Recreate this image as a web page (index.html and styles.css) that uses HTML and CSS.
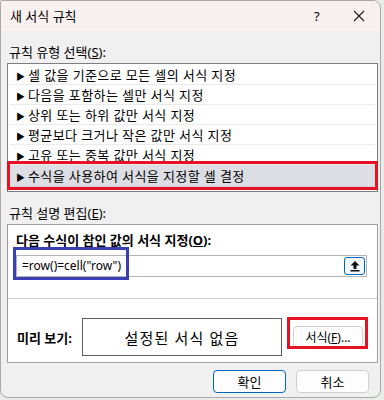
FILE: index.html
```html
<!DOCTYPE html>
<html lang="ko">
<head>
    <meta charset="UTF-8">
    <meta name="viewport" content="width=device-width, initial-scale=1.0">
    <title>새 서식 규칙</title>
    <link rel="stylesheet" href="styles.css">
</head>
<body>
    <div class="window">
        <div class="titlebar">
            <span class="title">새 서식 규칙</span>
            <span class="help">?</span>
            <svg class="close" width="12" height="12" viewBox="0 0 12 12">
                <path d="M1 1 L11 11 M11 1 L1 11" stroke="#1a1a1a" stroke-width="1.1" fill="none" />
            </svg>
        </div>

        <div class="content">
            <div class="label">규칙 유형 선택(<u>S</u>):</div>
            <ul class="rule-list">
                <li><span class="arrow">▶</span>셀 값을 기준으로 모든 셀의 서식 지정</li>
                <li><span class="arrow">▶</span>다음을 포함하는 셀만 서식 지정</li>
                <li><span class="arrow">▶</span>상위 또는 하위 값만 서식 지정</li>
                <li><span class="arrow">▶</span>평균보다 크거나 작은 값만 서식 지정</li>
                <li><span class="arrow">▶</span>고유 또는 중복 값만 서식 지정</li>
                <li class="selected"><span class="arrow">▶</span>수식을 사용하여 서식을 지정할 셀 결정</li>
            </ul>

            <div class="label label-edit">규칙 설명 편집(<u>E</u>):</div>
            <div class="panel">
                <div class="panel-top">
                    <div class="bold-label">다음 수식이 참인 값의 서식 지정(<u>O</u>):</div>
                    <div class="formula">
                        <span class="formula-text">=row()=cell("row")</span>
                        <span class="range-btn">
                            <svg width="10" height="12" viewBox="0 0 10 12">
                                <path d="M5 1 L9.5 5.5 L6.5 5.5 L6.5 9 L3.5 9 L3.5 5.5 L0.5 5.5 Z" fill="#111" />
                                <rect x="0.5" y="10" width="9" height="1.5" fill="#111" />
                            </svg>
                        </span>
                    </div>
                </div>
                <div class="panel-bottom">
                    <span class="bold-label preview-label">미리 보기:</span>
                    <div class="preview">설정된 서식 없음</div>
                    <button class="btn format-btn">서식(<u>F</u>)...</button>
                </div>
            </div>

            <div class="actions">
                <button class="btn primary">확인</button>
                <button class="btn">취소</button>
            </div>
        </div>

        <!-- annotation boxes -->
        <div class="mark mark-rule"></div>
        <div class="mark mark-formula"></div>
        <div class="mark mark-format"></div>
    </div>
</body>
</html>
```

FILE: styles.css
```css
/* General Styles */
body {
    margin: 0;
    padding: 0;
    background-color: #e9ece9;
    font-family: "Noto Sans", "Noto Sans CJK KR", sans-serif;
    font-size: 13px;
    color: #000;
}

.window {
    position: relative;
    width: 381px;
    height: 398px;
    box-sizing: border-box;
    border: 1px solid #a9a9a9;
    border-radius: 2px 8px 8px 8px;
    background-color: #f0f0f0;
    overflow: hidden;
}

.titlebar {
    height: 30px;
    background-color: #f9f1ef;
    display: flex;
    align-items: center;
    padding: 0 0 0 9px;
}

.title {
    flex: 1;
    line-height: 16px;
}

.help {
    width: 20px;
    margin-right: 19px;
    font-size: 13px;
}

.close {
    margin-right: 15px;
}

.content {
    padding: 0 2px 0 6px;
}

.label {
    line-height: 16px;
    margin-top: 13px;
    margin-bottom: 3px;
    padding-left: 2px;
}

.label-edit {
    margin-top: 13px;
}

/* Rule list */
.rule-list {
    list-style: none;
    margin: 0;
    padding: 1px 2px 2px 2px;
    background-color: #fff;
    border: 1px solid #7f7f7f;
    height: 124px;
}

.rule-list li {
    height: 20px;
    box-sizing: border-box;
    border-bottom: 1px solid #ebebeb;
    line-height: 20px;
    padding-left: 6px;
    white-space: nowrap;
    letter-spacing: 0.4px;
}

.rule-list li.selected {
    height: 22px;
    line-height: 22px;
    background-color: #dddde4;
    border-bottom: 1px solid #cfcfd6;
}

.arrow {
    font-size: 9px;
    display: inline-block;
    width: 12px;
    letter-spacing: 0;
}

/* Edit panel */
.panel {
    background-color: #fff;
    border: 1px solid #a0a0a0;
    height: 137px;
}

.panel-top {
    padding: 7px 10px 0 8px;
    height: 66px;
    border-bottom: 1px solid #c9c9c9;
}

.bold-label {
    font-weight: bold;
    line-height: 16px;
}

.formula {
    margin-top: 7px;
    height: 22px;
    box-sizing: border-box;
    border: 1px solid #b4b4b4;
    display: flex;
    align-items: center;
    justify-content: space-between;
    padding: 0 1px 0 5px;
}

.formula-text {
    font-size: 12px;
    line-height: 20px;
}

.range-btn {
    width: 21px;
    height: 18px;
    box-sizing: border-box;
    border: 1px solid #0067c0;
    border-radius: 3px;
    background-color: #f3f8fd;
    display: flex;
    align-items: center;
    justify-content: center;
}

.panel-bottom {
    display: flex;
    align-items: center;
    padding: 19px 0 0 9px;
}

.preview-label {
    width: 65px;
    margin-top: 2px;
}

.preview {
    width: 200px;
    height: 38px;
    box-sizing: border-box;
    border: 1px solid #5f5f5f;
    display: flex;
    align-items: center;
    justify-content: center;
    font-size: 15px;
    letter-spacing: 1.2px;
}

.btn {
    font-family: "Noto Sans", "Noto Sans CJK KR", sans-serif;
    font-size: 13px;
    width: 73px;
    height: 23px;
    padding: 0;
    border: 1px solid #d0d0d0;
    border-radius: 4px;
    background-color: #fdfdfd;
    color: #000;
}

.format-btn {
    width: 70px;
    height: 22px;
    margin-left: 11px;
    font-size: 12px;
}

.actions {
    display: flex;
    justify-content: flex-end;
    gap: 10px;
    margin-top: 7px;
    padding-right: 9px;
}

.btn.primary {
    border-color: #0067c0;
}

/* Annotation boxes */
.mark {
    position: absolute;
    box-sizing: border-box;
    border: 3px solid #e81123;
}

.mark-rule {
    left: 6px;
    top: 160px;
    width: 371px;
    height: 29px;
}

.mark-formula {
    left: 12px;
    top: 246px;
    width: 116px;
    height: 33px;
    border-color: #3b3fb4;
}

.mark-format {
    left: 286px;
    top: 316px;
    width: 81px;
    height: 32px;
}
```
